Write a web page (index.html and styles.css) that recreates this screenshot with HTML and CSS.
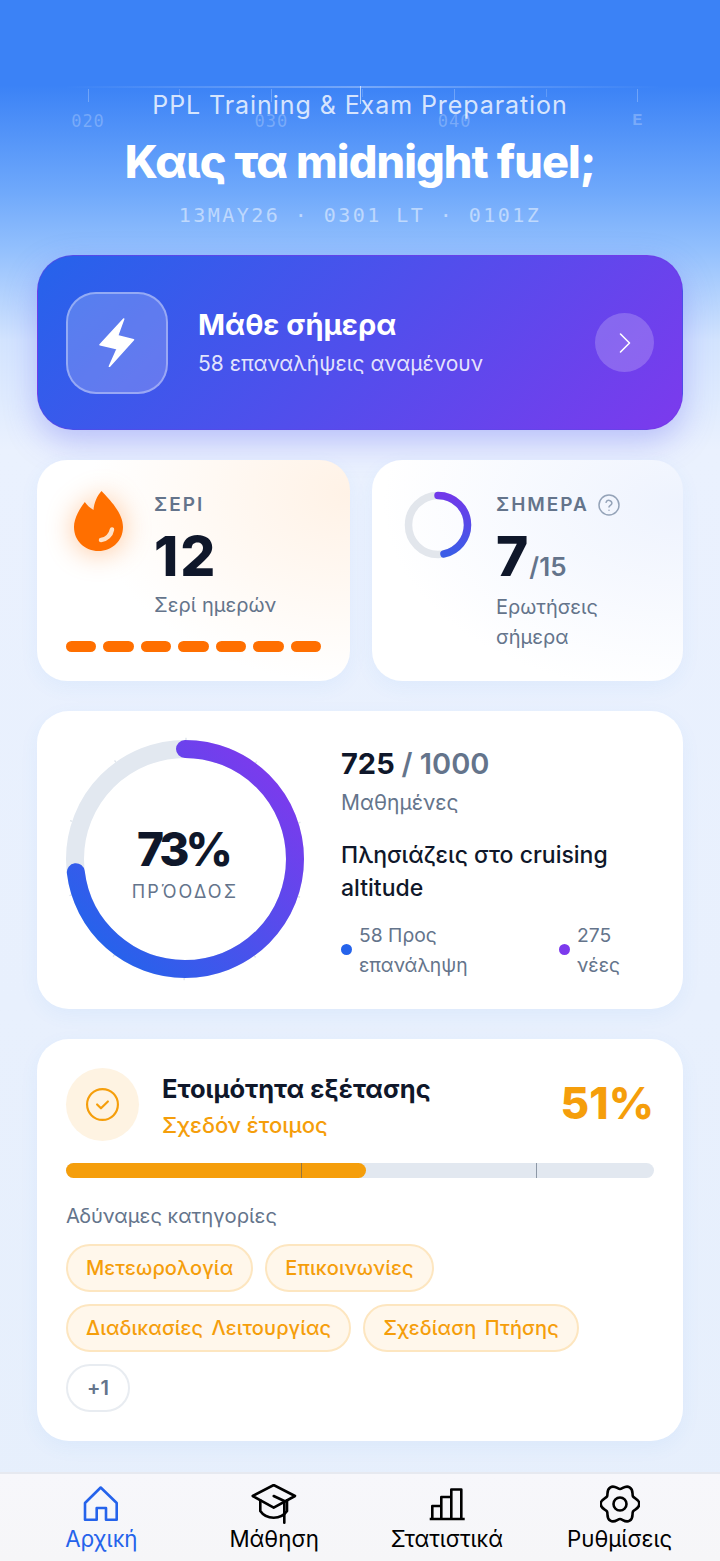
FILE: index.html
```html
<!DOCTYPE html>
<html lang="el">
<head>
    <meta charset="UTF-8">
    <meta name="viewport" content="width=device-width, initial-scale=1.0">
    <title>PPL Training</title>
    <link rel="stylesheet" href="styles.css">
</head>
<body>
    <div class="app">
        <main class="content">
            <header class="hero">
                <div class="tape">
                    <div class="tape-line"></div>
                    <div class="tape-center"></div>
                    <div class="tape-marks">
                        <div class="mark"><i></i><span>020</span></div>
                        <div class="mark minor"><i></i></div>
                        <div class="mark"><i></i><span>030</span></div>
                        <div class="mark minor"><i></i></div>
                        <div class="mark"><i></i><span>040</span></div>
                        <div class="mark minor"><i></i></div>
                        <div class="mark"><i></i><span class="cardinal">E</span></div>
                    </div>
                </div>
                <p class="hero-sub">PPL Training &amp; Exam Preparation</p>
                <h1 class="hero-title">Καις τα midnight fuel;</h1>
                <p class="hero-date">13MAY26 · 0301 LT · 0101Z</p>
            </header>

            <section class="learn-card">
                <div class="learn-icon">
                    <svg width="36" height="49" viewBox="0 0 36 49">
                        <path d="M24.7 1 1 26.7l17.2 4-7.8 17.7 24.1-26.7-15.9-4z" fill="#fff" stroke="#fff" stroke-width="1.5" stroke-linejoin="round"/>
                    </svg>
                </div>
                <div class="learn-text">
                    <h2>Μάθε σήμερα</h2>
                    <p>58 επαναλήψεις αναμένουν</p>
                </div>
                <div class="learn-go">
                    <svg width="14" height="22" viewBox="0 0 14 22">
                        <path d="M2.5 2 11.5 11l-9 9" fill="none" stroke="#fff" stroke-width="1.6" stroke-linecap="round" stroke-linejoin="round"/>
                    </svg>
                </div>
            </section>

            <div class="stats-row">
                <section class="stat-card streak">
                    <div class="stat-top">
                        <svg class="flame" width="50" height="60" viewBox="0 0 50 60">
                            <path d="M27.5 0C36 9 49 22 49 36 49 50 38 60 24.5 60 11 60 0 50 0 36 0 27 6 17 10.8 11c2.2 3 5.2 6 8.7 8C20 12 23 5 27.5 0z" fill="#ff6f00"/>
                            <path d="M27 49C32.5 48.5 37 44 38 38.5" fill="none" stroke="#ffe2c8" stroke-width="4.5" stroke-linecap="round"/>
                        </svg>
                        <div class="stat-info">
                            <div class="stat-label">ΣΕΡΙ</div>
                            <div class="stat-value">12</div>
                            <div class="stat-desc">Σερί ημερών</div>
                        </div>
                    </div>
                    <div class="streak-days">
                        <span></span><span></span><span></span><span></span><span></span><span></span><span></span>
                    </div>
                </section>

                <section class="stat-card today">
                    <div class="stat-top">
                        <svg class="today-ring" width="68" height="68" viewBox="0 0 68 68">
                            <defs>
                                <linearGradient id="todayGrad" x1="0" y1="0.5" x2="1" y2="0.5">
                                    <stop offset="0" stop-color="#3b5de7"/>
                                    <stop offset="1" stop-color="#7139ea"/>
                                </linearGradient>
                            </defs>
                            <circle cx="34" cy="34" r="29.5" fill="none" stroke="#e2e6ec" stroke-width="7.5"/>
                            <circle cx="34" cy="34" r="29.5" fill="none" stroke="url(#todayGrad)" stroke-width="7.5" stroke-linecap="round" stroke-dasharray="86.5 200" transform="rotate(-90 34 34)"/>
                        </svg>
                        <div class="stat-info">
                            <div class="stat-label">ΣΗΜΕΡΑ
                                <svg class="help" width="24" height="24" viewBox="0 0 24 24" fill="none" stroke="#94a3b8" stroke-width="1.5" stroke-linecap="round">
                                    <circle cx="12" cy="12" r="10"/>
                                    <path d="M9.1 9.3a3 3 0 0 1 5.8 1c0 2-2.9 2.6-2.9 3.6M12 17.2h.01"/>
                                </svg>
                            </div>
                            <div class="stat-value">7<small>/15</small></div>
                            <div class="stat-desc">Ερωτήσεις<br>σήμερα</div>
                        </div>
                    </div>
                </section>
            </div>

            <section class="progress-card">
                <div class="progress-ring">
                    <svg width="238" height="238" viewBox="0 0 238 238">
                        <defs>
                            <linearGradient id="ringGrad" x1="0" y1="0" x2="1" y2="1">
                                <stop offset="0.1" stop-color="#2563eb"/>
                                <stop offset="0.9" stop-color="#7c3aed"/>
                            </linearGradient>
                        </defs>
                        <circle cx="119" cy="119" r="120" fill="none" stroke="#dfe5ec" stroke-width="2.4" stroke-dasharray="1.4 74" transform="rotate(-54 119 119)"/>
                        <circle cx="119" cy="119" r="110" fill="none" stroke="#e2e8f0" stroke-width="18"/>
                        <circle cx="119" cy="119" r="110" fill="none" stroke="url(#ringGrad)" stroke-width="18" stroke-linecap="round" stroke-dasharray="504.5 700" transform="rotate(-90 119 119)"/>
                    </svg>
                    <div class="ring-center">
                        <div class="ring-pct">73%</div>
                        <div class="ring-label">ΠΡΌΟΔΟΣ</div>
                    </div>
                </div>
                <div class="progress-info">
                    <div class="progress-count">725 <span>/ 1000</span></div>
                    <div class="progress-sub">Μαθημένες</div>
                    <p class="progress-msg">Πλησιάζεις στο cruising altitude</p>
                    <div class="legend">
                        <div class="legend-item"><i class="dot-blue"></i><span>58 Προς<br>επανάληψη</span></div>
                        <div class="legend-item"><i class="dot-purple"></i><span>275<br>νέες</span></div>
                    </div>
                </div>
            </section>

            <section class="ready-card">
                <div class="ready-head">
                    <div class="ready-icon">
                        <svg width="37" height="37" viewBox="0 0 24 24" fill="none" stroke="#f59e0b" stroke-width="1.4" stroke-linecap="round" stroke-linejoin="round">
                            <circle cx="12" cy="12" r="10"/>
                            <path d="m8.5 12 2.5 2.5 4.5-4.5"/>
                        </svg>
                    </div>
                    <div class="ready-text">
                        <h3>Ετοιμότητα εξέτασης</h3>
                        <p>Σχεδόν έτοιμος</p>
                    </div>
                    <div class="ready-pct">51%</div>
                </div>
                <div class="ready-bar">
                    <div class="ready-fill" style="width: 51%"></div>
                    <i class="bar-tick tick-40"></i>
                    <i class="bar-tick tick-80"></i>
                </div>
                <div class="weak-title">Αδύναμες κατηγορίες</div>
                <div class="chips">
                    <span class="chip">Μετεωρολογία</span>
                    <span class="chip">Επικοινωνίες</span>
                    <span class="chip">Διαδικασίες Λειτουργίας</span>
                    <span class="chip">Σχεδίαση Πτήσης</span>
                    <span class="chip chip-more">+1</span>
                </div>
            </section>
        </main>

        <nav class="tabbar">
            <div class="tab active">
                <svg width="36" height="36" viewBox="0 0 36 36" fill="none" stroke="currentColor" stroke-width="2.6" stroke-linejoin="round">
                    <path d="M17.7 1.5 2 17v16.7h11.7V22H23v11.7h10.7V17z"/>
                </svg>
                <span>Αρχική</span>
            </div>
            <div class="tab">
                <svg width="46" height="40" viewBox="0 0 46 40" fill="none" stroke="currentColor" stroke-width="2.6" stroke-linecap="round" stroke-linejoin="round">
                    <path d="M1.7 12 22.7 1 44 12 22.7 23.7z"/>
                    <path d="M9.3 16.3V27c3 4.5 8 6.7 13.4 6.7S33 31.5 36 27V16.3"/>
                    <path d="M22.7 12l10.6 5v21.7"/>
                </svg>
                <span>Μάθηση</span>
            </div>
            <div class="tab">
                <svg width="36" height="36" viewBox="0 0 36 36" fill="none" stroke="currentColor" stroke-width="2.6" stroke-linejoin="round">
                    <path d="M.7 33h35M3.3 33V20h9v13M12.3 33V11h10v22M22.3 33V3.5h10V33"/>
                </svg>
                <span>Στατιστικά</span>
            </div>
            <div class="tab">
                <svg width="40" height="40" viewBox="-20 -20 40 40" fill="none" stroke="currentColor" stroke-width="2.6" stroke-linejoin="round">
                    <path d="M19.3 0C19.3 5 14.24 5.33 12.99 7.5 11.74 9.67 13.98 14.21 9.65 16.71 5.32 19.21 2.5 15 0 15-2.5 15-5.32 19.21-9.65 16.71-13.98 14.21-11.74 9.67-12.99 7.5-14.24 5.33-19.3 5-19.3 0-19.3-5-14.24-5.33-12.99-7.5-11.74-9.67-13.98-14.21-9.65-16.71-5.32-19.21-2.5-15 0-15 2.5-15 5.32-19.21 9.65-16.71 13.98-14.21 11.74-9.67 12.99-7.5 14.24-5.33 19.3-5 19.3 0z"/>
                    <circle r="6.5"/>
                </svg>
                <span>Ρυθμίσεις</span>
            </div>
        </nav>
    </div>
</body>
</html>
```
FILE: styles.css
```css
* {
    box-sizing: border-box;
}
body {
    margin: 0;
    font-family: Inter, "Noto Sans", sans-serif;
    color: #0f172a;
}
h1, h2, h3, p {
    margin: 0;
}
.app {
    width: 720px;
    height: 1561px;
    display: flex;
    flex-direction: column;
    overflow: hidden;
    background: linear-gradient(180deg, #3b82f6 0, #3b82f6 85px, #6ea8fb 190px, #93c0fd 250px, #d3e4fe 340px, #eaf1fe 450px, #e6effc 100%);
}
.content {
    flex: 1;
    padding: 0 37px;
    display: flex;
    flex-direction: column;
}

/* hero */
.hero {
    position: relative;
    padding-top: 90px;
    text-align: center;
    margin-bottom: 28px;
}
.tape {
    position: absolute;
    top: 86px;
    left: 27px;
    width: 598px;
    height: 46px;
}
.tape-line {
    position: absolute;
    top: 0;
    left: 0;
    right: 0;
    height: 2px;
    background: linear-gradient(90deg, transparent, rgba(255,255,255,0.3) 50%, transparent);
}
.tape-center {
    position: absolute;
    top: 0;
    left: 296px;
    width: 1px;
    height: 18px;
    background: rgba(255,255,255,0.6);
}
.tape-marks {
    display: flex;
    justify-content: space-between;
    padding-top: 3px;
}
.mark {
    width: 48px;
    display: flex;
    flex-direction: column;
    align-items: center;
}
.mark i {
    width: 1px;
    height: 13px;
    background: rgba(255,255,255,0.25);
}
.mark.minor i {
    height: 8px;
    background: rgba(255,255,255,0.18);
}
.mark span {
    margin-top: 8px;
    font-family: "DejaVu Sans Mono", monospace;
    font-size: 17px;
    line-height: 22px;
    letter-spacing: 1px;
    color: rgba(255,255,255,0.25);
}
.mark .cardinal {
    font-family: "Liberation Mono", monospace;
    font-weight: 700;
}
.hero-sub {
    position: relative;
    font-size: 25px;
    line-height: 30px;
    letter-spacing: 0.93px;
    color: rgba(255,255,255,0.8);
}
.hero-title {
    position: relative;
    margin-top: 14px;
    font-size: 45px;
    line-height: 56px;
    font-weight: 800;
    letter-spacing: -0.9px;
    color: #fff;
}
.hero-date {
    margin-top: 13px;
    font-family: "DejaVu Sans Mono", monospace;
    font-size: 20px;
    line-height: 24px;
    letter-spacing: 2.45px;
    color: rgba(255,255,255,0.5);
}

/* learn card */
.learn-card {
    height: 175px;
    padding: 0 28px 0 28px;
    display: flex;
    align-items: center;
    border-radius: 36px;
    border: 1px solid rgba(109,60,230,0.5);
    background: linear-gradient(135deg, #2563eb, #7c3aed);
    box-shadow: 0 12px 32px rgba(99,102,241,0.35);
    color: #fff;
}
.learn-icon {
    width: 102px;
    height: 102px;
    display: flex;
    align-items: center;
    justify-content: center;
    border-radius: 30px;
    border: 2px solid rgba(255,255,255,0.35);
    background: rgba(255,255,255,0.2);
}
.learn-text {
    flex: 1;
    margin-left: 30px;
}
.learn-text h2 {
    font-size: 29px;
    line-height: 36px;
    font-weight: 700;
}
.learn-text p {
    margin-top: 6px;
    font-size: 21px;
    line-height: 30px;
    color: rgba(255,255,255,0.85);
}
.learn-go {
    width: 59px;
    height: 59px;
    display: flex;
    align-items: center;
    justify-content: center;
    border-radius: 50%;
    background: rgba(255,255,255,0.2);
}

/* stat cards */
.stats-row {
    margin-top: 30px;
    display: grid;
    grid-template-columns: 313px 311px;
    gap: 22px;
}
.stat-card {
    height: 221px;
    border-radius: 30px;
    background: #fff;
    box-shadow: 0 6px 20px rgba(59,130,246,0.06);
}
.streak {
    padding: 31px 29px 0 29px;
    background: radial-gradient(ellipse 260px 190px at 100% 15%, #fff2e6, rgba(255,255,255,0) 100%), #fff;
}
.today {
    padding: 31px 29px 0 32px;
    background: radial-gradient(ellipse 300px 190px at 100% 20%, #eef3fe, rgba(255,255,255,0) 100%), #fff;
}
.stat-top {
    display: flex;
    align-items: flex-start;
}
.flame {
    flex: none;
    margin: 0 0 0 8px;
    filter: drop-shadow(0 2px 14px rgba(255,111,0,0.4));
}
.stat-info {
    margin-left: 30px;
}
.today .stat-info {
    margin-left: 24px;
}
.stat-label {
    display: flex;
    align-items: center;
    gap: 8px;
    font-size: 19px;
    line-height: 28px;
    font-weight: 600;
    letter-spacing: 2px;
    color: #64748b;
}
.help {
    flex: none;
}
.stat-value {
    margin-top: 6px;
    font-size: 55px;
    line-height: 62px;
    font-weight: 800;
}
.streak .stat-value {
    letter-spacing: 2px;
}
.stat-value small {
    margin-left: 1px;
    font-size: 26px;
    line-height: 1;
    font-weight: 600;
    color: #64748b;
}
.stat-desc {
    margin-top: 3px;
    font-size: 20px;
    line-height: 30px;
    color: #64748b;
}
.today .stat-desc {
    margin-top: 5px;
}
.streak-days {
    margin-top: 21px;
    display: flex;
    gap: 7px;
}
.streak-days span {
    flex: 1;
    height: 11px;
    border-radius: 6px;
    background: #ff6f00;
}

/* progress card */
.progress-card {
    margin-top: 30px;
    height: 298px;
    padding: 29px 29px 0 29px;
    display: flex;
    border-radius: 32px;
    background: #fff;
    box-shadow: 0 6px 20px rgba(59,130,246,0.06);
}
.progress-ring {
    position: relative;
    flex: none;
    width: 238px;
    height: 238px;
}
.progress-ring svg {
    overflow: visible;
}
.ring-center {
    position: absolute;
    top: 0;
    left: 0;
    width: 238px;
    height: 238px;
    padding-top: 7px;
    display: flex;
    flex-direction: column;
    align-items: center;
    justify-content: center;
}
.ring-pct {
    margin-right: 4px;
    font-size: 46px;
    line-height: 54px;
    font-weight: 800;
    letter-spacing: -4px;
}
.ring-label {
    margin-top: 5px;
    font-size: 18px;
    line-height: 22px;
    letter-spacing: 2.2px;
    color: #64748b;
}
.progress-info {
    flex: 1;
    margin-left: 37px;
    padding-top: 5px;
}
.progress-count {
    font-size: 29px;
    line-height: 38px;
    font-weight: 700;
}
.progress-count span {
    font-weight: 600;
    color: #64748b;
}
.progress-sub {
    margin-top: 7px;
    font-size: 21px;
    line-height: 26px;
    color: #64748b;
}
.progress-msg {
    margin-top: 23px;
    font-size: 23px;
    line-height: 33px;
    font-weight: 500;
}
.legend {
    margin-top: 15px;
    display: flex;
    justify-content: space-between;
    padding-right: 34px;
}
.legend-item {
    display: flex;
    align-items: center;
    gap: 7px;
    font-size: 19.3px;
    line-height: 30px;
    color: #64748b;
}
.legend-item i {
    width: 11px;
    height: 11px;
    margin-top: -2px;
    border-radius: 50%;
}
.dot-blue {
    background: #2563eb;
}
.dot-purple {
    background: #7c3aed;
}

/* readiness card */
.ready-card {
    margin-top: 30px;
    height: 402px;
    padding: 29px 29px 0 29px;
    border-radius: 32px;
    background: #fff;
    box-shadow: 0 6px 20px rgba(59,130,246,0.06);
}
.ready-head {
    display: flex;
    align-items: center;
}
.ready-icon {
    width: 73px;
    height: 73px;
    display: flex;
    align-items: center;
    justify-content: center;
    border-radius: 50%;
    background: #fef3e2;
}
.ready-text {
    flex: 1;
    margin-left: 23px;
    padding-top: 2px;
}
.ready-text h3 {
    font-size: 25.5px;
    line-height: 34px;
    font-weight: 700;
}
.ready-text p {
    margin-top: 4px;
    font-size: 22px;
    line-height: 30px;
    font-weight: 500;
    color: #f59e0b;
}
.ready-pct {
    margin-bottom: 4px;
    font-size: 44px;
    line-height: 50px;
    font-weight: 800;
    color: #f59e0b;
}
.ready-bar {
    position: relative;
    margin-top: 22px;
    height: 15px;
    border-radius: 8px;
    background: #e2e8f0;
}
.ready-fill {
    height: 15px;
    border-radius: 8px;
    background: #f59e0b;
}
.bar-tick {
    position: absolute;
    top: 0;
    width: 1px;
    height: 15px;
    background: rgba(71,85,105,0.55);
}
.tick-40 {
    left: 40%;
}
.tick-80 {
    left: 80%;
}
.weak-title {
    margin-top: 25px;
    font-size: 20.2px;
    line-height: 26px;
    color: #64748b;
}
.chips {
    margin-top: 15px;
    padding-right: 10px;
    display: flex;
    flex-wrap: wrap;
    gap: 12px;
}
.chip {
    height: 48px;
    padding: 0 18px;
    display: flex;
    align-items: center;
    border-radius: 25px;
    border: 2px solid #fde6c0;
    background: #fff7eb;
    font-size: 20px;
    font-weight: 500;
    letter-spacing: 0.1px;
    word-spacing: 3px;
    color: #f59e0b;
}
.chip-more {
    padding: 0 19px;
    border-color: #e8ecf1;
    background: #fff;
    font-weight: 600;
    color: #64748b;
}

/* bottom nav */
.tabbar {
    flex: none;
    height: 89px;
    padding: 10px 14px 0 15px;
    display: grid;
    grid-template-columns: repeat(4, 1fr);
    border-top: 2px solid #e6e9f0;
    background: linear-gradient(180deg, #f7f7fb, #f6f6f8);
}
.tab {
    display: flex;
    flex-direction: column;
    align-items: center;
    font-size: 22.3px;
    color: #000;
}
.tab svg {
    display: block;
    height: 40px;
}
.tab span {
    margin-top: 1px;
    line-height: 28px;
}
.tab.active {
    color: #2563eb;
}
```
